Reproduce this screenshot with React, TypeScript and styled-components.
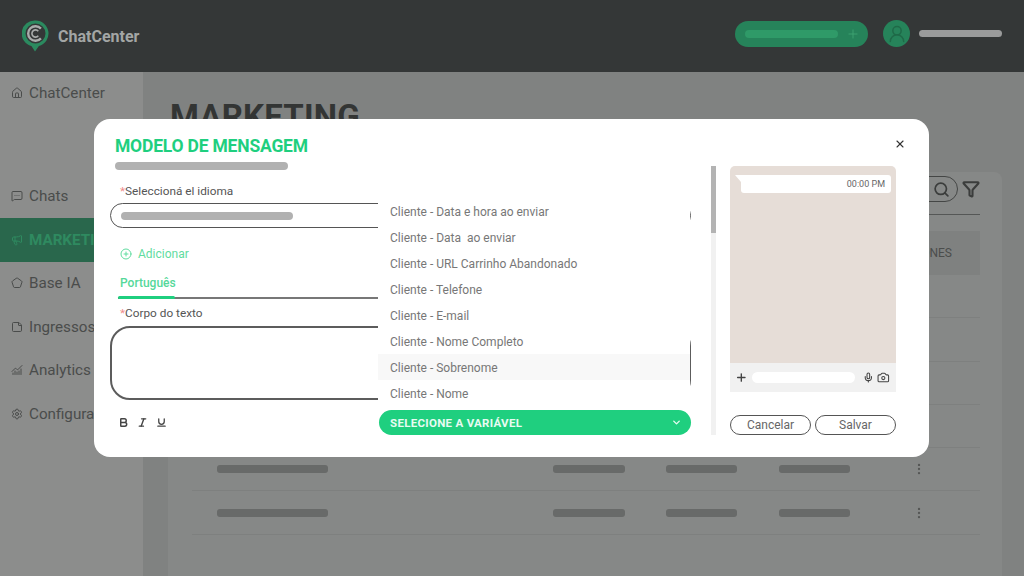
import React from 'react';
import styled, { createGlobalStyle } from 'styled-components';
import {
  Bold,
  Camera,
  ChartNoAxesCombined,
  ChevronDown,
  CirclePlus,
  EllipsisVertical,
  Filter,
  House,
  Italic,
  Megaphone,
  MessageSquareMore,
  Mic,
  Pentagon,
  Plus,
  Search,
  Settings,
  StickyNote,
  Underline,
  UserRound,
  X,
} from 'lucide-react';

const GlobalStyle = createGlobalStyle`
  html, body {
    margin: 0;
    padding: 0;
    overflow: hidden;
  }
  body {
    font-family: Roboto, "Liberation Sans", sans-serif;
  }
  * {
    box-sizing: border-box;
  }
`;

const Page = styled.div`
  position: relative;
  width: 1024px;
  height: 576px;
  overflow: hidden;
  display: flex;
  flex-direction: column;
  background: #858786;
`;

const Header = styled.header`
  height: 72px;
  flex-shrink: 0;
  display: flex;
  align-items: center;
  padding: 0 22px;
  background: #343737;
`;

const Brand = styled.div`
  display: flex;
  align-items: center;
  gap: 9px;
  margin-right: auto;
  font-size: 16px;
  font-weight: 700;
  color: #a3a6a5;
`;

const HeaderActions = styled.div`
  display: flex;
  align-items: center;
  margin-bottom: 5px;
`;

const NewButton = styled.div`
  width: 133px;
  height: 26px;
  display: flex;
  align-items: center;
  gap: 8px;
  padding: 0 8px 0 10px;
  border-radius: 13px;
  background: #26835a;
  color: #3ea373;
`;

const NewBar = styled.div`
  width: 93px;
  height: 8px;
  border-radius: 4px;
  background: #2f9a68;
`;

const Avatar = styled.div`
  width: 27px;
  height: 27px;
  margin-left: 15px;
  display: flex;
  align-items: center;
  justify-content: center;
  border-radius: 50%;
  background: #26835a;
  color: #1f6a48;
`;

const UserBar = styled.div`
  width: 83px;
  height: 7px;
  margin-left: 9px;
  border-radius: 4px;
  background: #9a9b9b;
`;

const Body = styled.div`
  flex: 1;
  display: flex;
  min-height: 0;
`;

const Sidebar = styled.nav`
  width: 143px;
  flex-shrink: 0;
  background: #8c8d8c;
`;

const NavItem = styled.div<{ $active?: boolean; $first?: boolean }>`
  height: ${(p) => (p.$first ? '42.5px' : '43.5px')};
  display: flex;
  align-items: center;
  gap: 6px;
  padding-left: 11px;
  margin-bottom: ${(p) => (p.$first ? '60px' : '0')};
  font-size: 15.2px;
  font-weight: ${(p) => (p.$active ? 700 : 400)};
  white-space: nowrap;
  overflow: hidden;
  color: ${(p) => (p.$active ? '#2f8a60' : '#4a4c4b')};
  background: ${(p) => (p.$active ? '#29674c' : 'transparent')};
`;

const Main = styled.main`
  flex: 1;
  min-width: 0;
  padding: 0 22px 0 25px;
  background: #808281;
`;

const Heading = styled.h1`
  margin: 0;
  height: 100px;
  padding: 25px 0 0 2px;
  font-size: 33px;
  line-height: 40px;
  font-weight: 700;
  letter-spacing: 0.2px;
  color: #333534;
`;

const Panel = styled.section`
  height: 420px;
  padding: 0 22px 0 24px;
  border-radius: 8px;
  background: #868887;
`;

const Toolbar = styled.div`
  height: 43px;
  display: flex;
  justify-content: flex-end;
  align-items: center;
  gap: 4px;
  padding-bottom: 8px;
  border-bottom: 1px solid #555756;
  color: #3b3d3c;
`;

const SearchPill = styled.div`
  width: 160px;
  height: 26px;
  display: flex;
  align-items: center;
  justify-content: flex-end;
  padding-right: 7px;
  border: 1px solid #444645;
  border-radius: 13px;
`;

const TableHead = styled.div`
  height: 44px;
  margin-top: 16px;
  display: flex;
  align-items: center;
  justify-content: flex-end;
  padding-right: 28px;
  font-size: 12px;
  color: #4b4d4c;
  background: #7f8180;
`;

const Row = styled.div`
  height: 43.3px;
  display: grid;
  grid-template-columns: 336px 113px 113px 133px 1fr;
  align-items: center;
  padding-left: 25px;
  border-bottom: 1px solid #7e807f;
  color: #555756;
`;

const RowBar = styled.div<{ $width: number }>`
  width: ${(p) => p.$width}px;
  height: 8px;
  border-radius: 3px;
  background: #686a69;
`;

const Backdrop = styled.div`
  position: absolute;
  inset: 0;
  display: flex;
  align-items: center;
  justify-content: center;
  padding-right: 1px;
`;

const Modal = styled.div`
  position: relative;
  width: 835px;
  height: 338px;
  display: grid;
  grid-template-columns: 581px 25px 180px;
  align-items: end;
  padding: 16px 33px 22px 16px;
  border-radius: 16px;
  background: #ffffff;
`;

const CloseButton = styled.button`
  position: absolute;
  top: 19px;
  right: 23px;
  padding: 0;
  display: flex;
  border: 0;
  background: none;
  color: #333333;
`;

const FormColumn = styled.div`
  position: relative;
  height: 300px;
  width: 581px;
`;

const Title = styled.h2`
  margin: 0;
  padding-left: 5px;
  font-size: 17.5px;
  line-height: 22px;
  font-weight: 700;
  letter-spacing: -0.2px;
  color: #1fcf7f;
`;

const TitleBar = styled.div`
  width: 173px;
  height: 8px;
  margin-top: 5px;
  margin-left: 5px;
  border-radius: 4px;
  background: #b1b1b1;
`;

const Label = styled.div<{ $top: number }>`
  margin-top: ${(p) => p.$top}px;
  padding-left: 10px;
  font-size: 11.8px;
  line-height: 16px;
  color: #555555;

  &::before {
    content: '*';
    color: #f08a8a;
  }
`;

const LanguageInput = styled.div`
  height: 25px;
  margin-top: 4px;
  display: flex;
  align-items: center;
  padding-left: 10px;
  border: 1px solid #555555;
  border-radius: 13px;
`;

const InputBar = styled.div`
  width: 172px;
  height: 8px;
  border-radius: 4px;
  background: #b1b1b1;
`;

const AddLink = styled.div`
  height: 18px;
  margin-top: 17px;
  padding-left: 10px;
  display: flex;
  align-items: center;
  gap: 6px;
  font-size: 12px;
  color: #5fdca0;
`;

const Tab = styled.div`
  margin-top: 12px;
  padding-left: 10px;
  font-size: 12px;
  line-height: 16px;
  font-weight: 500;
  color: #55d89a;
`;

const TabLine = styled.div`
  position: relative;
  height: 2px;
  margin: 6px 3px 0 8px;
  background: #777777;

  &::before {
    content: '';
    position: absolute;
    left: 0;
    top: -1px;
    width: 57px;
    height: 3px;
    border-radius: 2px;
    background: #1fcf7f;
  }
`;

const BodyInput = styled.div`
  height: 74px;
  margin-top: 5px;
  border: 2px solid #5c5c5c;
  border-radius: 20px;
`;

const FormatRow = styled.div`
  height: 14px;
  margin-top: 15px;
  padding-left: 8px;
  display: flex;
  align-items: center;
  gap: 8px;
  color: #444444;
`;

const VariableMenu = styled.div`
  position: absolute;
  left: 268px;
  bottom: 0;
  width: 313px;
`;

const MenuList = styled.div`
  width: 312px;
  padding-bottom: 4px;
  background: #ffffff;
`;

const MenuItem = styled.div<{ $active?: boolean }>`
  height: 26px;
  display: flex;
  align-items: center;
  padding: 1px 0 0 12px;
  font-size: 12px;
  white-space: pre;
  color: #777777;
  background: ${(p) => (p.$active ? '#f8f8f8' : 'transparent')};
`;

const MenuButton = styled.div`
  height: 25px;
  margin-left: 1px;
  display: flex;
  align-items: center;
  justify-content: space-between;
  padding: 0 9px 0 11px;
  border-radius: 13px;
  font-size: 11.5px;
  font-weight: 700;
  letter-spacing: 0.3px;
  color: #e8fbf2;
  background: #1fcf7f;
`;

const ScrollTrack = styled.div`
  height: 269px;
  width: 5px;
  margin-left: 20px;
  background: #f1f1f1;

  &::before {
    content: '';
    display: block;
    height: 67px;
    background: #b3b3b3;
  }
`;

const PreviewColumn = styled.div`
  width: 166px;
  height: 269px;
  margin-left: 14px;
  display: flex;
  flex-direction: column;
`;

const Wallpaper = styled.div`
  height: 197px;
  padding: 9px 5px 0 11px;
  border-radius: 5px 5px 0 0;
  background: #e6ddd7;
`;

const Bubble = styled.div`
  position: relative;
  height: 18px;
  display: flex;
  align-items: center;
  justify-content: flex-end;
  padding-right: 6px;
  border-radius: 0 3px 3px 3px;
  font-size: 9px;
  color: #666666;
  background: #ffffff;

  &::before {
    content: '';
    position: absolute;
    left: -6px;
    top: 0;
    border-top: 7px solid #ffffff;
    border-left: 6px solid transparent;
  }
`;

const ChatBar = styled.div`
  height: 29px;
  display: flex;
  align-items: center;
  gap: 4px;
  padding: 0 6px 0 5px;
  color: #444444;
  background: #f1f1f1;
`;

const ChatInput = styled.div`
  width: 106px;
  height: 11px;
  margin-right: 4px;
  border-radius: 6px;
  background: #ffffff;
`;

const Actions = styled.div`
  margin-top: auto;
  display: flex;
  gap: 4px;
`;

const OutlineButton = styled.button`
  flex: 1;
  height: 20px;
  padding: 0;
  border: 1px solid #555555;
  border-radius: 10px;
  font-family: inherit;
  font-size: 12px;
  color: #666666;
  background: #ffffff;
`;

const variables = [
  'Cliente - Data e hora ao enviar',
  'Cliente - Data  ao enviar',
  'Cliente - URL Carrinho Abandonado',
  'Cliente - Telefone',
  'Cliente - E-mail',
  'Cliente - Nome Completo',
  'Cliente - Sobrenome',
  'Cliente - Nome',
];

const Logo: React.FC = () => (
  <svg width="27" height="32" viewBox="0 0 27 32" fill="none">
    <path
      fillRule="evenodd"
      clipRule="evenodd"
      d="M13.5 0.5a13 13 0 0 1 3.4 25.55L13 31.5l-3.6-5.45A13 13 0 0 1 13.5 0.5Zm0 3a10 10 0 1 0 0 20 10 10 0 0 0 0-20Z"
      fill="#2b8a5f"
    />
    <path d="M18.9 8.6a7.3 7.3 0 1 0 0 9.8" stroke="#a9acab" strokeWidth="2.4" />
    <path d="M16.3 11.2a3.6 3.6 0 1 0 0 4.6" stroke="#a9acab" strokeWidth="1.6" />
  </svg>
);

const App: React.FC = () => {
  return (
    <Page>
      <GlobalStyle />
      <Header>
        <Brand>
          <Logo />
          ChatCenter
        </Brand>
        <HeaderActions>
          <NewButton>
            <NewBar />
            <Plus size={14} strokeWidth={1.5} />
          </NewButton>
          <Avatar>
            <UserRound size={20} strokeWidth={1.8} />
          </Avatar>
          <UserBar />
        </HeaderActions>
      </Header>
      <Body>
        <Sidebar>
          <NavItem $first>
            <House size={12} />
            ChatCenter
          </NavItem>
          <NavItem>
            <MessageSquareMore size={12} />
            Chats
          </NavItem>
          <NavItem $active>
            <Megaphone size={12} />
            MARKETING
          </NavItem>
          <NavItem>
            <Pentagon size={12} />
            Base IA
          </NavItem>
          <NavItem>
            <StickyNote size={12} />
            Ingressos
          </NavItem>
          <NavItem>
            <ChartNoAxesCombined size={12} />
            Analytics
          </NavItem>
          <NavItem>
            <Settings size={12} />
            Configurações
          </NavItem>
        </Sidebar>
        <Main>
          <Heading>MARKETING</Heading>
          <Panel>
            <Toolbar>
              <SearchPill>
                <Search size={17} strokeWidth={2.4} />
              </SearchPill>
              <Filter size={18} strokeWidth={2.8} />
            </Toolbar>
            <TableHead>OPCIONES</TableHead>
            {[0, 1, 2, 3, 4, 5].map((row) => (
              <Row key={row}>
                <RowBar $width={111} />
                <RowBar $width={72} />
                <RowBar $width={71} />
                <RowBar $width={71} />
                <EllipsisVertical size={14} />
              </Row>
            ))}
          </Panel>
        </Main>
      </Body>
      <Backdrop>
        <Modal>
          <CloseButton>
            <X size={12} strokeWidth={2.2} />
          </CloseButton>
          <FormColumn>
            <Title>MODELO DE MENSAGEM</Title>
            <TitleBar />
            <Label $top={13}>Seleccioná el idioma</Label>
            <LanguageInput>
              <InputBar />
            </LanguageInput>
            <AddLink>
              <CirclePlus size={12} />
              Adicionar
            </AddLink>
            <Tab>Português</Tab>
            <TabLine />
            <Label $top={6}>Corpo do texto</Label>
            <BodyInput />
            <FormatRow>
              <Bold size={11} strokeWidth={3.2} />
              <Italic size={11} strokeWidth={3} />
              <Underline size={11} strokeWidth={2.8} />
            </FormatRow>
            <VariableMenu>
              <MenuList>
                {variables.map((name) => (
                  <MenuItem key={name} $active={name === 'Cliente - Sobrenome'}>
                    {name}
                  </MenuItem>
                ))}
              </MenuList>
              <MenuButton>
                SELECIONE A VARIÁVEL
                <ChevronDown size={11} strokeWidth={3} />
              </MenuButton>
            </VariableMenu>
          </FormColumn>
          <ScrollTrack />
          <PreviewColumn>
            <Wallpaper>
              <Bubble>00:00 PM</Bubble>
            </Wallpaper>
            <ChatBar>
              <Plus size={13} strokeWidth={2.6} />
              <ChatInput />
              <Mic size={11} strokeWidth={2.4} />
              <Camera size={13} strokeWidth={2} />
            </ChatBar>
            <Actions>
              <OutlineButton>Cancelar</OutlineButton>
              <OutlineButton>Salvar</OutlineButton>
            </Actions>
          </PreviewColumn>
        </Modal>
      </Backdrop>
    </Page>
  );
};

export default App;
